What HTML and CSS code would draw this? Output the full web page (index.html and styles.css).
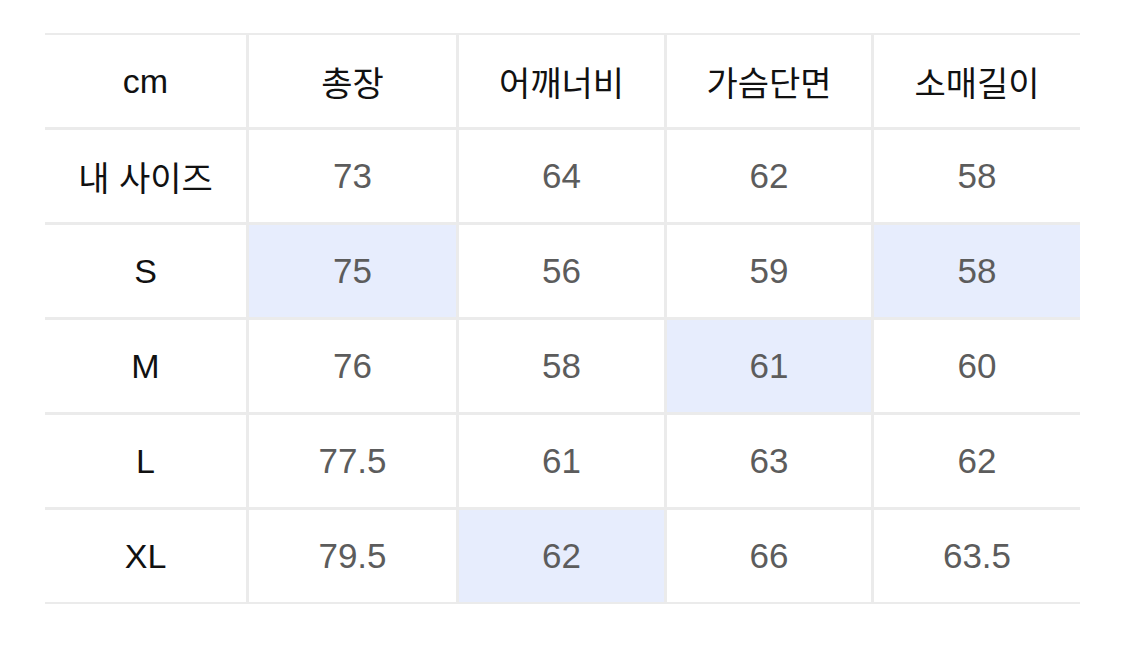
FILE: index.html
```html
<!DOCTYPE html>
<html lang="ko">
<head>
<meta charset="utf-8">
<link rel="stylesheet" href="styles.css">
</head>
<body>
<div class="page">
  <div class="size-table">
    <div class="cell head">cm</div>
    <div class="cell head">총장</div>
    <div class="cell head">어깨너비</div>
    <div class="cell head">가슴단면</div>
    <div class="cell head">소매길이</div>

    <div class="cell head">내 사이즈</div>
    <div class="cell val">73</div>
    <div class="cell val">64</div>
    <div class="cell val">62</div>
    <div class="cell val">58</div>

    <div class="cell head">S</div>
    <div class="cell val hl">75</div>
    <div class="cell val">56</div>
    <div class="cell val">59</div>
    <div class="cell val hl">58</div>

    <div class="cell head">M</div>
    <div class="cell val">76</div>
    <div class="cell val">58</div>
    <div class="cell val hl">61</div>
    <div class="cell val">60</div>

    <div class="cell head">L</div>
    <div class="cell val">77.5</div>
    <div class="cell val">61</div>
    <div class="cell val">63</div>
    <div class="cell val">62</div>

    <div class="cell head">XL</div>
    <div class="cell val">79.5</div>
    <div class="cell val hl">62</div>
    <div class="cell val">66</div>
    <div class="cell val">63.5</div>
  </div>
</div>
</body>
</html>
```

FILE: styles.css
```css
html, body {
  margin: 0;
  padding: 0;
  background: #ffffff;
}
.page {
  padding: 33px 45px 0 45px;
}
.size-table {
  display: grid;
  grid-template-columns: 201px 207px 205px 204px 206px;
  grid-auto-rows: 92px;
  gap: 3px;
  padding: 2px 0;
  background: #ebebeb;
  width: 1035px;
}
.cell {
  background: #ffffff;
  display: flex;
  align-items: center;
  justify-content: center;
  font-family: "Liberation Sans", "Noto Sans CJK KR", sans-serif;
}
.head {
  color: #111111;
  font-size: 34px;
}
.val {
  color: #5c5c5c;
  font-size: 35px;
}
.hl {
  background: #e7edfd;
}
```
